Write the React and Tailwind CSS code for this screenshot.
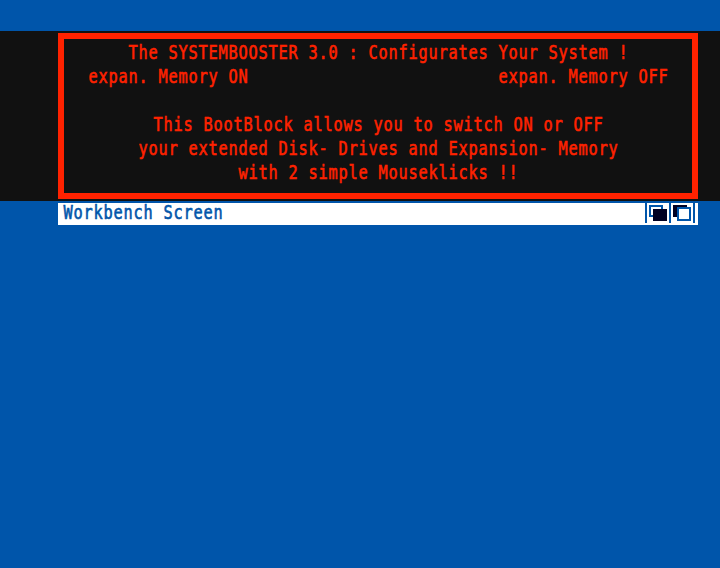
const textStyle =
  "origin-center translate-x-[0.5px] translate-y-[-0.3px] scale-y-[1.25] whitespace-pre font-['DejaVu_Sans_Mono',monospace] text-[15.3px] leading-6 tracking-[0.789px] [-webkit-text-stroke:0.5px_currentColor]";

function Line({ children }) {
  return <div className={`${textStyle} h-6 text-center`}>{children}</div>;
}

function DepthGadgets() {
  return (
    <svg className="mr-[3px] block h-5 w-[50px]" viewBox="0 0 50 20" shapeRendering="crispEdges">
      <path fill="#0055aa" d="M0 0h2v20H0zM24 0h2v20h-2zM48 0h2v20h-2z" />
      <rect x="5" y="3" width="12" height="10" fill="#fff" stroke="#0055aa" strokeWidth="2" />
      <rect x="8" y="6" width="14" height="12" fill="#000022" />
      <rect x="28" y="2" width="14" height="12" fill="#000022" />
      <rect x="33" y="5" width="12" height="12" fill="#fff" stroke="#0055aa" strokeWidth="2" />
    </svg>
  );
}

export default function App() {
  return (
    <main className="h-[568px] w-[720px] overflow-hidden bg-[#0055aa] pt-[31px]">
      <section className="h-[170px] bg-[#111111] pt-0.5 pr-[22px] pl-[58px]">
        <div className="h-[166px] border-[6px] border-[#ff2200] pt-0.5 text-[#ff2200]">
          <Line>The SYSTEMBOOSTER 3.0 : Configurates Your System !</Line>
          <div className={`${textStyle} flex h-6 justify-between px-6`}>
            <span>expan. Memory ON</span>
            <span>expan. Memory OFF</span>
          </div>
          <div className="h-6" />
          <Line>This BootBlock allows you to switch ON or OFF</Line>
          <Line>your extended Disk- Drives and Expansion- Memory</Line>
          <Line>with 2 simple Mouseklicks !!</Line>
        </div>
      </section>
      <header className="mt-0.5 mr-[22px] ml-[58px] flex h-[22px] items-start justify-between bg-white pl-[5px] text-[#0055aa]">
        <h1 className={`${textStyle} -mt-0.5`}>Workbench Screen</h1>
        <DepthGadgets />
      </header>
    </main>
  );
}
